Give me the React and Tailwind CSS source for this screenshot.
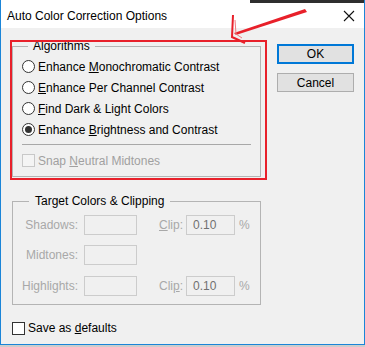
import React from 'react';

const font = { fontFamily: '"Liberation Sans", Arial, sans-serif' };

function Radio({ checked, children }) {
  return (
    <div className="flex items-center h-[21px]">
      <span className="w-[13px] h-[13px] rounded-full border border-[#333] bg-white flex items-center justify-center">
        {checked && <span className="w-[7px] h-[7px] rounded-full bg-[#333]" />}
      </span>
      <span className="ml-[3px] text-[12px] text-black leading-[14px]">{children}</span>
    </div>
  );
}

function Field({ label, clip }) {
  return (
    <div className="flex items-center h-[20px] text-[12px]">
      <span className="w-[65px] text-right text-[#a8a8a8]">{label}</span>
      <span className="ml-[6px] w-[53px] h-[20px] border border-[#cccccc] bg-[#f0f0f0]" />
      {clip && (
        <>
          <span className="ml-[22px] w-[22px] text-[#a8a8a8]">{clip}</span>
          <span className="ml-[5px] w-[49px] h-[20px] border border-[#cccccc] bg-[#f0f0f0] pl-[6px] leading-[18px] text-[#707070]">
            0.10
          </span>
          <span className="ml-[4px] text-[#a8a8a8]">%</span>
        </>
      )}
    </div>
  );
}

export default function App() {
  return (
    <div className="w-[365px] h-[347px] bg-[#cdcdcd] relative overflow-hidden" style={font}>
      <div className="w-[365px] h-[345px] border-l border-r border-b border-[#1b85d8] flex flex-col bg-[#f0f0f0]">
        {/* desktop strip behind the window */}
        <div className="flex h-[3px]">
          <div className="w-[249px] bg-white" />
          <div className="flex-1 bg-[#2f2f2f]" />
        </div>
        {/* title bar */}
        <div className="h-[25px] bg-white flex items-center justify-between pl-[6px] pr-[9px]">
          <span className="text-[12px] text-black">Auto Color Correction Options</span>
          <svg width="12" height="12" viewBox="0 0 12 12">
            <path d="M1 1 L11 11 M11 1 L1 11" stroke="#111" strokeWidth="1.1" />
          </svg>
        </div>

        {/* body */}
        <div className="flex pl-[11px]">
          <div className="w-[249px] flex flex-col">
            {/* Algorithms */}
            <div className="relative mt-[18px] h-[131px] border border-[#b4b4b4] pt-[9px] px-[9px]">
              <span className="absolute -top-[8px] left-[15px] px-[5px] bg-[#f0f0f0] text-[12px] leading-[14px] text-black">
                Algorithms
              </span>
              <Radio>
                Enhance <span className="underline">M</span>onochromatic Contrast
              </Radio>
              <Radio>
                <span className="underline">E</span>nhance Per Channel Contrast
              </Radio>
              <Radio>
                <span className="underline">F</span>ind Dark &amp; Light Colors
              </Radio>
              <Radio checked>
                Enhance <span className="underline">B</span>rightness and Contrast
              </Radio>
              <div className="mt-[4px] h-px bg-[#a8a8a8]" />
              <div className="mt-[5px] flex items-center h-[21px]">
                <span className="w-[13px] h-[13px] border border-[#c8c8c8] bg-[#f4f4f4]" />
                <span className="ml-[3px] text-[12px] text-[#a0a0a0]">
                  Snap <span className="underline">N</span>eutral Midtones
                </span>
              </div>
            </div>

            {/* Target Colors & Clipping */}
            <div className="relative mt-[24px] h-[104px] border border-[#b4b4b4] pt-[13px]">
              <span className="absolute -top-[8px] left-[16px] px-[6px] bg-[#f0f0f0] text-[12px] leading-[14px] text-black">
                Target Colors &amp; Clipping
              </span>
              <Field
                label="Shadows:"
                clip={
                  <>
                    <span className="underline">C</span>lip:
                  </>
                }
              />
              <div className="mt-[10px]">
                <Field label="Midtones:" />
              </div>
              <div className="mt-[11px]">
                <Field
                  label="Highlights:"
                  clip={
                    <>
                      Cli<span className="underline">p</span>:
                    </>
                  }
                />
              </div>
            </div>

            <div className="mt-[13px] flex items-center h-[20px]">
              <span className="w-[13px] h-[13px] border border-[#333] bg-white" />
              <span className="ml-[3px] text-[12px] text-black">
                Save as <span className="underline">d</span>efaults
              </span>
            </div>
          </div>

          {/* buttons */}
          <div className="ml-[16px] mt-[16px] flex flex-col">
            <button className="w-[77px] h-[20px] border-2 border-[#0078d7] bg-[#e1e1e1] text-[12px] leading-none text-black">
              OK
            </button>
            <button className="mt-[9px] w-[77px] h-[19px] border border-[#adadad] bg-[#e1e1e1] text-[12px] leading-none text-black">
              Cancel
            </button>
          </div>
        </div>
      </div>

      {/* red annotation */}
      <div className="absolute left-[10px] top-[40px] w-[257px] h-[140px] border-2 border-[#e8202a]" />
      <svg className="absolute left-0 top-0" width="365" height="347" viewBox="0 0 365 347">
        <polygon points="305,9 307,12 236,35 234,33" fill="#e8202a" />
        <polyline
          points="233,15 232,37 245,43"
          fill="none"
          stroke="#e8202a"
          strokeWidth="2"
          strokeLinejoin="miter"
        />
        <polyline points="235,20 236,34 242,38" fill="none" stroke="#f07a80" strokeWidth="1" />
      </svg>
    </div>
  );
}
